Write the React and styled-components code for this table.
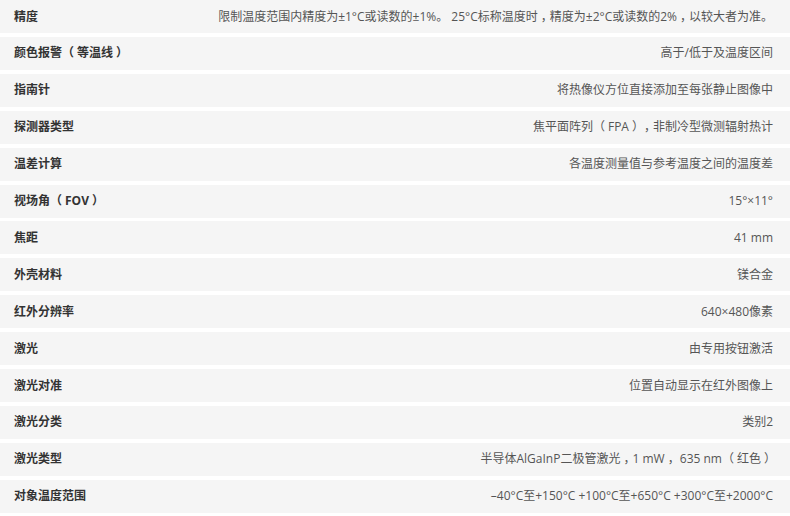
import React from "react";
import styled, { createGlobalStyle, css } from "styled-components";

const Global = createGlobalStyle`
  html, body { margin: 0; padding: 0; background: #ffffff; }
  body { font-family: "Open Sans", "Noto Sans CJK SC", sans-serif; }
`;

const SpecList = styled.div`
  display: flex;
  flex-direction: column;
  gap: 3.92px;
  width: 790px;
`;

const SpecRow = styled.div`
  display: flex;
  align-items: center;
  justify-content: space-between;
  height: 33px;
  padding: 0 17px 0 14px;
  background: #f5f5f5;
  font-size: 12px;
  line-height: 1;
`;

const Label = styled.span`
  color: #333333;
  font-weight: 700;
  white-space: nowrap;
`;

const Value = styled.span`
  color: #555555;
  text-align: right;
  white-space: nowrap;
`;

/* full-width punctuation given breathing room, as the reference draws it centred */
const Punct = styled.span`
  display: inline-block;
  ${(p) =>
    p.$open
      ? css`
          padding-right: 3px;
        `
      : css`
          padding-left: 3px;
          letter-spacing: -3px;
        `}
`;

function withPunct(s) {
  return s.split(/([，（）])/).map((part, i) =>
    /^[，（）]$/.test(part) ? (
      <Punct key={i} $open={part === "（"}>
        {part}
      </Punct>
    ) : (
      <React.Fragment key={i}>{part}</React.Fragment>
    )
  );
}

const specs = [
  ["精度", "限制温度范围内精度为±1°C或读数的±1%。 25°C标称温度时，精度为±2°C或读数的2%，以较大者为准。"],
  ["颜色报警（等温线）", "高于/低于及温度区间"],
  ["指南针", "将热像仪方位直接添加至每张静止图像中"],
  ["探测器类型", "焦平面阵列（FPA），非制冷型微测辐射热计"],
  ["温差计算", "各温度测量值与参考温度之间的温度差"],
  ["视场角（FOV）", "15°×11°"],
  ["焦距", "41 mm"],
  ["外壳材料", "镁合金"],
  ["红外分辨率", "640×480像素"],
  ["激光", "由专用按钮激活"],
  ["激光对准", "位置自动显示在红外图像上"],
  ["激光分类", "类别2"],
  ["激光类型", "半导体AlGaInP二极管激光，1 mW， 635 nm（红色）"],
  ["对象温度范围", "–40°C至+150°C +100°C至+650°C +300°C至+2000°C"],
];

export default function App() {
  return (
    <>
      <Global />
      <SpecList>
        {specs.map(([k, v]) => (
          <SpecRow key={k}>
            <Label>{withPunct(k)}</Label>
            <Value>{withPunct(v)}</Value>
          </SpecRow>
        ))}
      </SpecList>
    </>
  );
}
